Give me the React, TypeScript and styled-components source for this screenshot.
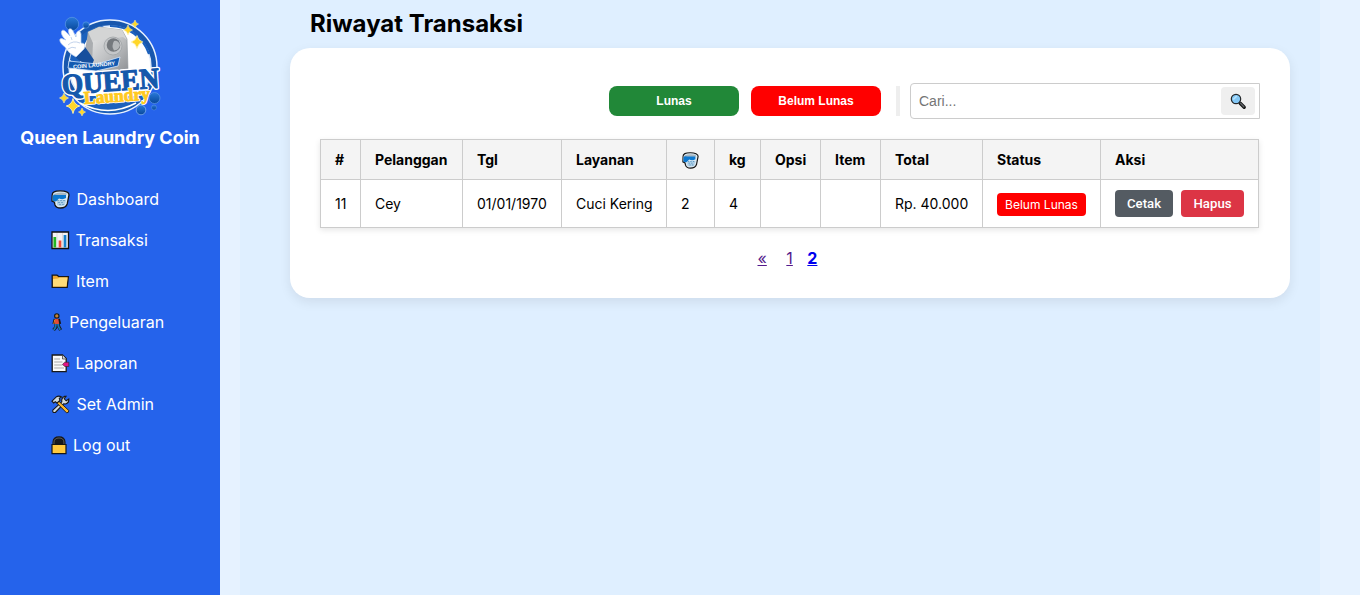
import React from 'react';
import styled, { createGlobalStyle } from 'styled-components';

const GlobalStyle = createGlobalStyle`
  * { box-sizing: border-box; }
  body { margin: 0; background: #e6f2ff; font-family: Inter, sans-serif; color: #000; overflow: hidden; }
`;

const Layout = styled.div`
  display: flex;
  height: 100vh;
`;

const Sidebar = styled.aside`
  flex: 0 0 220px;
  background: #2563eb;
  color: #fff;
  padding-top: 16px;
  display: flex;
  flex-direction: column;
`;

const LogoSvg = styled.svg`
  width: 104px;
  height: 102px;
  margin-left: 58px;
  display: block;
  overflow: visible;
`;

const Brand = styled.h1`
  margin: 8px 0 0;
  font-size: 18px;
  line-height: 24px;
  font-weight: 700;
  text-align: center;
`;

const Menu = styled.nav`
  margin-top: 28px;
  display: flex;
  flex-direction: column;
`;

const MenuItem = styled.a<{ $gap: number }>`
  display: flex;
  align-items: center;
  height: 41px;
  padding-left: 51px;
  gap: ${(p) => p.$gap}px;
  font-size: 16px;
  color: #fff;
`;

const Icon = styled.svg`
  display: block;
  flex: none;
`;

const MenuIcon = styled.span`
  display: block;
  padding-top: 2px;
`;

const Content = styled.main`
  flex: 1;
  margin: 0 40px 0 20px;
  padding: 0 30px 0 50px;
  background: #dfefff;
`;

const Title = styled.h2`
  margin: 0;
  padding: 9px 0 0 20px;
  height: 48px;
  font-size: 24px;
  line-height: 30px;
  font-weight: 700;
`;

const Card = styled.section`
  height: 250px;
  padding: 35px 30px 0;
  border-radius: 20px;
  background: #fff;
  box-shadow: 0 4px 12px rgba(0, 0, 0, 0.08);
`;

const Toolbar = styled.div`
  display: flex;
  align-items: center;
  justify-content: flex-end;
`;

const FilterButton = styled.button<{ $color: string }>`
  width: 130px;
  height: 30px;
  margin-right: 12px;
  padding: 0;
  border: 0;
  border-radius: 8px;
  background: ${(p) => p.$color};
  color: #fff;
  font: bold 12px 'Liberation Sans', Arial, sans-serif;
`;

const Divider = styled.span`
  width: 4px;
  height: 30px;
  margin: 0 10px 0 3px;
  background: #eee;
`;

const SearchBox = styled.div`
  width: 350px;
  height: 36px;
  display: flex;
  align-items: center;
  padding-right: 4px;
  border: 1px solid #ccc;
  border-radius: 4px 0 0 4px;
`;

const SearchInput = styled.input`
  flex: 1;
  min-width: 0;
  padding: 0 8px;
  border: 0;
  outline: 0;
  background: transparent;
  font: 14px 'Liberation Sans', Arial, sans-serif;
  &::placeholder { color: #757575; }
`;

const SearchButton = styled.button`
  width: 34px;
  height: 28px;
  display: grid;
  place-items: center;
  padding: 0;
  border: 0;
  border-radius: 4px;
  background: #efefef;
`;

const Table = styled.table`
  width: 939px;
  margin-top: 20px;
  table-layout: fixed;
  border-collapse: collapse;
  font-size: 14px;
  box-shadow: 0 2px 6px rgba(0, 0, 0, 0.1);
`;

const Th = styled.th`
  height: 40px;
  padding: 0 0 0 14px;
  border: 1px solid #ccc;
  background: #f4f4f4;
  text-align: left;
  font-weight: 700;
`;

const Td = styled.td`
  height: 48px;
  padding: 0 0 0 14px;
  border: 1px solid #ccc;
  white-space: nowrap;
`;

const Badge = styled.span`
  display: block;
  width: 89px;
  height: 23px;
  margin-top: 1px;
  border-radius: 4px;
  background: #f00;
  color: #fff;
  font-size: 12px;
  line-height: 24px;
  text-align: center;
`;

const Actions = styled.div`
  display: flex;
  gap: 8px;
  margin-top: -1px;
`;

const ActionButton = styled.button<{ $color: string; $width: number }>`
  width: ${(p) => p.$width}px;
  height: 27px;
  padding: 0;
  border: 0;
  border-radius: 4px;
  background: ${(p) => p.$color};
  color: #fff;
  font: 500 13.2px Roboto, sans-serif;
`;

const Pagination = styled.nav`
  display: flex;
  margin: 20px 0 0 437.5px;
  font-size: 16px;
  line-height: 20px;
`;

const PageLink = styled.a<{ $active?: boolean; $gap?: number }>`
  margin-right: ${(p) => p.$gap ?? 0}px;
  color: ${(p) => (p.$active ? '#0000ee' : '#551a8b')};
  font-weight: ${(p) => (p.$active ? 700 : 400)};
  text-decoration: underline;
`;

const Star = ({ x, y, r }: { x: number; y: number; r: number }) => (
  <path
    transform={`translate(${x} ${y}) scale(${r})`}
    d="M0-1Q.16-.2 .9 0Q.16.2 0 1Q-.16.2-.9 0Q-.16-.2 0-1Z"
    fill="#ffd629"
    stroke="#fff3ac"
    strokeWidth=".12"
  />
);

const Logo = () => (
  <LogoSvg viewBox="58 16 104 102">
    <defs>
      <linearGradient id="steel" x1="0" y1="0" x2="1" y2="1">
        <stop stopColor="#efefef" />
        <stop offset=".55" stopColor="#bfc1c3" />
        <stop offset="1" stopColor="#8d9093" />
      </linearGradient>
      <linearGradient id="blue" x1="0" y1="0" x2="0" y2="1">
        <stop stopColor="#2879d9" />
        <stop offset="1" stopColor="#084799" />
      </linearGradient>
    </defs>
    <circle cx="110" cy="67" r="47" fill="#1857ad" stroke="#e8f2ff" strokeWidth="1.5" />
    <circle cx="110" cy="67" r="41" fill="#fff" stroke="#dce9fb" strokeWidth="1.4" />
    <path d="M110 26A41 41 0 0 1 149 54" fill="none" stroke="#1b61bd" strokeWidth="2.2" />
    <path d="M70 60C74 38 87 27 104 26C86 35 80 48 80 68Z" fill="#1b61bd" />
    <path d="M74 96A46 46 0 0 0 145 96Z" fill="#1b61bd" />
    <path d="M80 103Q108 118 136 103" fill="none" stroke="#fff" strokeWidth="1.5" />
    <circle cx="72" cy="24" r="6.7" fill="url(#blue)" stroke="#5c98e4" strokeWidth=".7" />
    <circle cx="86" cy="25" r="3.2" fill="url(#blue)" stroke="#5c98e4" strokeWidth=".6" />
    <path d="M88 32L99 27L122 30L127 39L128 69Q108 76 93 68Z" fill="url(#steel)" stroke="#8b9399" strokeWidth=".6" />
    <path d="M88 32L91 41L123 37L127 40L122 30L99 27Z" fill="#d4d5d5" />
    <path d="M88 32L93 43L92 64L84 57Z" fill="#aaadb0" />
    <circle cx="113" cy="46" r="9" fill="#c5c7c9" stroke="#a0a4a7" strokeWidth=".8" />
    <circle cx="113.5" cy="45" r="6.8" fill="#75797d" />
    <path d="M114 41Q118 40 120 45Q119 50 114 50.5Q111 46 114 41Z" fill="#b5b8ba" />
    <path d="M75 57L83 44L90 54L94 60L91 67L80 61Z" fill="#164f9d" />
    <path d="M65 47C59 43 58 37 63 39L66 40C59 34 61 28 65 31L70 36C66 28 71 27 73 31L76 37C76 30 80 29 81 34L81 43Q87 43 84 49L76 57Q69 54 65 47Z" fill="#fff" stroke="#b5cdef" strokeWidth=".7" />
    <path d="M68 45Q73 40 80 43M68 49Q72 46 76 48M71 37L72 40" fill="none" stroke="#a9c0e2" strokeWidth=".7" />
    <path d="M69 61L97 64L120 57L118 66L96 71L68 68Z" fill="#125ab1" stroke="#d7e9ff" strokeWidth=".8" />
    <text x="73" y="67" fill="#fff" fontFamily="Liberation Sans" fontSize="5.6" fontWeight="700" textLength="42" lengthAdjust="spacingAndGlyphs" transform="rotate(-5 94 65)">COIN LAUNDRY</text>
    <g transform="rotate(-4 111 80)" fontFamily="Liberation Serif" fontSize="29" fontWeight="700" strokeLinejoin="round">
      <text x="61.5" y="91" textLength="97.5" lengthAdjust="spacingAndGlyphs" fill="#1558ab" stroke="#fff" strokeWidth="4">QUEEN</text>
      <text x="61.5" y="91" textLength="97.5" lengthAdjust="spacingAndGlyphs" fill="#1558ab" stroke="#1558ab" strokeWidth="1.2">QUEEN</text>
    </g>
    <g transform="rotate(-4 113 99)" fontFamily="Liberation Serif" fontSize="18" fontWeight="700" strokeLinejoin="round">
      <text x="84" y="102" textLength="66" lengthAdjust="spacingAndGlyphs" fill="#ffd02e" stroke="#fff" strokeWidth="2.4">Laundry</text>
      <text x="84" y="102" textLength="66" lengthAdjust="spacingAndGlyphs" fill="#ffc91f" stroke="#ffc91f" strokeWidth=".9">Laundry</text>
    </g>
    <circle cx="154.5" cy="98" r="5.5" fill="url(#blue)" stroke="#5c98e4" strokeWidth=".7" />
    <circle cx="141" cy="110" r="4.8" fill="url(#blue)" stroke="#8bb8f2" strokeWidth=".7" />
    <circle cx="154" cy="107.5" r="2.5" fill="url(#blue)" stroke="#5c98e4" strokeWidth=".5" />
    <Star x={135} y={24} r={4} /><Star x={128} y={30} r={5} /><Star x={137} y={42} r={6.5} />
    <Star x={64} y={98} r={5} /><Star x={73} y={106} r={7.5} /><Star x={82} y={112} r={4} />
  </LogoSvg>
);

const Bucket = ({ size = 19 }: { size?: number }) => (
  <Icon width={size} height={size} viewBox="0 0 19 19">
    <path d="M1.2 5C1 2 4 .9 9 .8C14.5.7 18.2 2.3 18 5L16.2 14Q14.8 18 9.5 18Q5 18 4 15L3.4 12.3L1 11Z" fill="#dceaf3" stroke="#151515" strokeWidth="1.3" />
    <path d="M3 4Q8 1.4 15.5 3.2Q16 5 14.5 6H6L5 10H1.8V5Z" fill="#a8b8c3" />
    <path d="M1.7 6Q3 4 5.7 5H15V8Q12 10 8 8.5L5 11.5L1.7 11Z" fill="#0b78d1" />
    <path d="M6 10H15L13.7 15Q9.5 17 6 15Z" fill="#adcfe7" />
    <path d="M7 10v1M10 10v1M13 10v1M8 12v1M11 12v1M9 14v1M12 14v1" stroke="#397eaf" />
  </Icon>
);

const Chart = () => (
  <Icon width="19" height="19" viewBox="0 0 19 19">
    <path d="M1 1H17.5V17.5H1Z" fill="#f4f2f5" stroke="#111" strokeWidth="1.3" />
    <path d="M6 2V16M11.5 2V16" stroke="#ddd" />
    <path d="M3.8 6V16.5" stroke="#21b522" strokeWidth="2.7" />
    <path d="M9 9.5V16.5" stroke="#ee4a36" strokeWidth="2.7" />
    <path d="M14 4V16.5" stroke="#1682cf" strokeWidth="2.7" />
  </Icon>
);

const Folder = () => (
  <Icon width="19" height="19" viewBox="0 0 19 19">
    <path d="M1.2 3.2H6L8 4.7H17.4L16.2 15.3H1.2Z" fill="#efa82f" stroke="#171717" strokeWidth="1.3" />
    <path d="M2 7L7 6.5L8.3 5.5H16.5L15.5 14.5H2Z" fill="#ffdb78" />
  </Icon>
);

const Walker = () => (
  <Icon width="12" height="19" viewBox="0 0 12 19">
    <path d="M4.2 6L3 11M7.4 6L8.6 11M5.2 11L4.6 14.5L2.6 17M7 11L8 14L9.6 17" fill="none" stroke="#171717" strokeWidth="3.2" />
    <circle cx="5.8" cy="2.9" r="2.2" fill="#c78335" stroke="#171717" strokeWidth="1.1" />
    <path d="M4 6L7.3 5.8L8.2 11H3.8Z" fill="#e34b36" />
    <path d="M3.8 6.5L2.8 11" stroke="#e98b2d" strokeWidth="1" />
    <path d="M5 11L4.4 14.5L2.8 17M7 11L7.6 14L9.2 16.8" fill="none" stroke="#1573b7" strokeWidth="1.9" />
  </Icon>
);

const Report = () => (
  <Icon width="19" height="19" viewBox="0 0 19 19">
    <path d="M1.2 1H11.5L15.2 4.5V17.7H1.2Z" fill="#fafafa" stroke="#191919" strokeWidth="1.3" />
    <path d="M11.5 1V5H15" fill="#ddd" stroke="#444" strokeWidth=".8" />
    <path d="M3.2 5H9M3.2 8H11.5M3.2 11H11.5M3.2 14H13" stroke="#a9a9a9" />
    <path d="M11.5 10.3L13.7 8.2H17.8V12.5H13.7Z" fill="#e11484" stroke="#222" strokeWidth=".6" />
  </Icon>
);

const Tools = () => (
  <Icon width="19" height="19" viewBox="0 0 19 19">
    <path d="M1.8 15.2L10.8 6.8Q10.2 3 13.3 1.4L15 1.3L13.2 3.8L15.2 5.8L17.8 4Q18.2 8 14.5 9L12.6 8.8L4.4 17.4Q1.2 18.2 1.8 15.2Z" fill="#d3dadd" stroke="#171717" strokeWidth="1.1" />
    <path d="M7.8 6.2L17.8 15.5Q18 18 15.5 17.8L6 8.2Z" fill="#f8b52c" stroke="#171717" strokeWidth=".9" />
    <path d="M1 6.2L5.5 1.7Q8 .5 10.6 2L8.3 3.2L9 5.3L6 8L4.3 6.8L2.7 8Z" fill="#d0dade" stroke="#171717" strokeWidth="1.1" />
  </Icon>
);

const Lock = () => (
  <Icon width="16" height="19" viewBox="0 0 16 19">
    <path d="M2.7 9V6Q2.9 1.4 8 1.4T13.3 6V9Z" fill="#17191e" stroke="#171717" strokeWidth="2.5" />
    <path d="M3 8.5V6Q3.3 2 8 2T12.9 6V8.5" fill="none" stroke="#6b6b6b" strokeWidth=".8" />
    <path d="M1 8.5H15V17.7H1Z" fill="#ffc83d" stroke="#171717" strokeWidth="1.2" />
  </Icon>
);

const Magnifier = () => (
  <Icon width="17" height="17" viewBox="0 0 17 17">
    <path d="M10.2 10.2L14.2 14.2" stroke="#171717" strokeWidth="3.4" strokeLinecap="round" />
    <path d="M10.5 10.3L13.8 13.7" stroke="#61666b" strokeWidth="1.3" strokeLinecap="round" />
    <circle cx="6" cy="6" r="4.7" fill="#83c7f5" stroke="#25282b" strokeWidth="1.2" />
    <path d="M3.2 6.5L6.8 3" stroke="#b6e4ff" strokeWidth="1.7" />
  </Icon>
);

const menu = [
  { label: 'Dashboard', icon: <Bucket />, gap: 6.5 },
  { label: 'Transaksi', icon: <Chart />, gap: 5.5 },
  { label: 'Item', icon: <Folder />, gap: 6 },
  { label: 'Pengeluaran', icon: <Walker />, gap: 6.3 },
  { label: 'Laporan', icon: <Report />, gap: 5.5 },
  { label: 'Set Admin', icon: <Tools />, gap: 6.5 },
  { label: 'Log out', icon: <Lock />, gap: 6 },
];

const Col = styled.col<{ $width: number }>`
  width: ${(p) => p.$width}px;
`;

const HeadingIcon = styled.span`
  display: block;
  padding: 1px 0 0 1px;
`;

const columns: { label: React.ReactNode; width: number }[] = [
  { label: '#', width: 40 },
  { label: 'Pelanggan', width: 102 },
  { label: 'Tgl', width: 99 },
  { label: 'Layanan', width: 105 },
  { label: <HeadingIcon><Bucket size={17} /></HeadingIcon>, width: 48 },
  { label: 'kg', width: 46 },
  { label: 'Opsi', width: 60 },
  { label: 'Item', width: 60 },
  { label: 'Total', width: 102 },
  { label: 'Status', width: 118 },
  { label: 'Aksi', width: 158 },
];

const row = ['11', 'Cey', '01/01/1970', 'Cuci Kering', '2', '4', '', '', 'Rp. 40.000'];

export default function App() {
  return (
    <>
      <GlobalStyle />
      <Layout>
        <Sidebar>
          <Logo />
          <Brand>Queen Laundry Coin</Brand>
          <Menu>
            {menu.map((m) => (
              <MenuItem key={m.label} $gap={m.gap}><MenuIcon>{m.icon}</MenuIcon>{m.label}</MenuItem>
            ))}
          </Menu>
        </Sidebar>
        <Content>
          <Title>Riwayat Transaksi</Title>
          <Card>
            <Toolbar>
              <FilterButton $color="#218838">Lunas</FilterButton>
              <FilterButton $color="#ff0000">Belum Lunas</FilterButton>
              <Divider />
              <SearchBox>
                <SearchInput placeholder="Cari..." />
                <SearchButton aria-label="Cari"><Magnifier /></SearchButton>
              </SearchBox>
            </Toolbar>
            <Table>
              <colgroup>{columns.map((c, i) => <Col key={i} $width={c.width} />)}</colgroup>
              <thead>
                <tr>{columns.map((c, i) => <Th key={i}>{c.label}</Th>)}</tr>
              </thead>
              <tbody>
                <tr>
                  {row.map((value, i) => <Td key={i}>{value}</Td>)}
                  <Td><Badge>Belum Lunas</Badge></Td>
                  <Td>
                    <Actions>
                      <ActionButton $color="#545b62" $width={58}>Cetak</ActionButton>
                      <ActionButton $color="#dc3545" $width={63}>Hapus</ActionButton>
                    </Actions>
                  </Td>
                </tr>
              </tbody>
            </Table>
            <Pagination>
              <PageLink $gap={19.5}>«</PageLink>
              <PageLink $gap={14.5}>1</PageLink>
              <PageLink $active>2</PageLink>
            </Pagination>
          </Card>
        </Content>
      </Layout>
    </>
  );
}
